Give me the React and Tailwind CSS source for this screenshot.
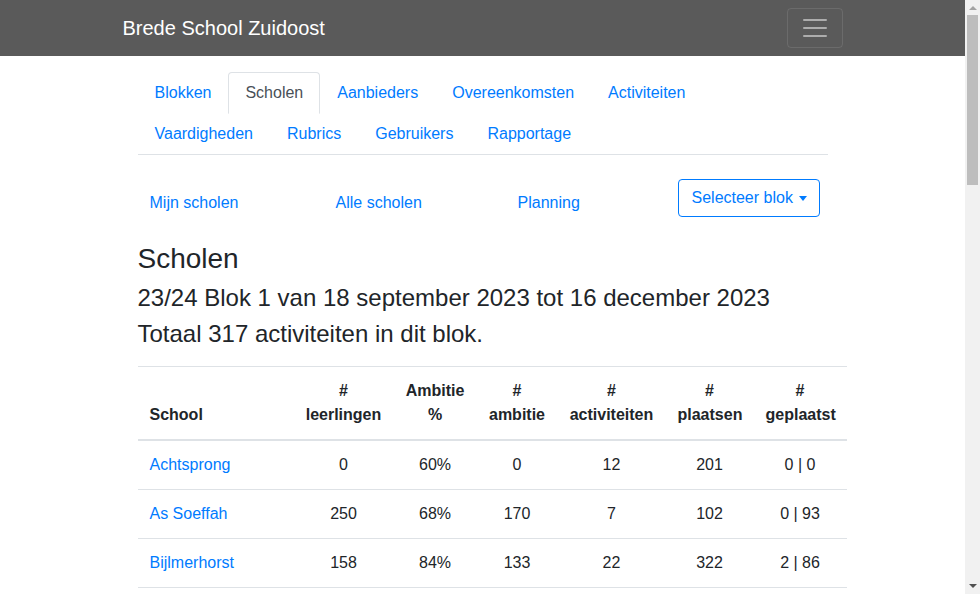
const tabs = [
  'Blokken',
  'Scholen',
  'Aanbieders',
  'Overeenkomsten',
  'Activiteiten',
  'Vaardigheden',
  'Rubrics',
  'Gebruikers',
  'Rapportage',
];

const scholen = [
  ['Achtsprong', 0, '60%', 0, 12, 201, '0 | 0'],
  ['As Soeffah', 250, '68%', 170, 7, 102, '0 | 93'],
  ['Bijlmerhorst', 158, '84%', 133, 22, 322, '2 | 86'],
];

function NavTabs() {
  return (
    <ul className="flex flex-wrap border-b border-[#dee2e6]">
      {tabs.map((t) => (
        <li key={t} className="-mb-px">
          <a
            href="#"
            className={
              t === 'Scholen'
                ? 'block px-4 py-2 leading-6 border border-[#dee2e6] border-b-white rounded-t bg-white text-[#495057]'
                : 'block px-4 py-2 leading-6 border border-transparent rounded-t text-[#007bff]'
            }
          >
            {t}
          </a>
        </li>
      ))}
    </ul>
  );
}

// window scrollbar as it shows in the screenshot
function Scrollbar() {
  return (
    <div className="flex w-[15px] shrink-0 flex-col items-center bg-[#f1f1f1]">
      <div className="flex h-[15px] items-center justify-center">
        <span className="h-0 w-0 border-x-[4px] border-b-[4px] border-x-transparent border-b-[#a3a3a3]" />
      </div>
      <div className="h-[170px] w-[11px] bg-[#bdbdbd]" />
      <div className="flex-1" />
      <div className="flex h-[15px] items-center justify-center pb-[2px]">
        <span className="h-0 w-0 border-x-[4px] border-t-[4px] border-x-transparent border-t-[#505050]" />
      </div>
    </div>
  );
}

export default function App() {
  return (
    <div className="flex h-screen overflow-hidden bg-white text-[16px] text-[#212529] font-['Liberation_Sans',Arial,sans-serif]">
      <div className="flex-1 overflow-hidden">
        <nav className="h-14 bg-[#5a5a5a]">
          <div className="mx-auto flex h-full w-[720px] items-center justify-between">
            <a href="#" className="text-[20px] leading-[30px] text-white">
              Brede School Zuidoost
            </a>
            <button className="flex h-10 w-14 items-center justify-center rounded border border-white/10">
              <svg width="30" height="30" viewBox="0 0 30 30">
                <path
                  d="M4 7h22M4 15h22M4 23h22"
                  stroke="rgba(255,255,255,0.5)"
                  strokeWidth="2"
                  strokeLinecap="round"
                />
              </svg>
            </button>
          </div>
        </nav>

        <div className="mx-auto w-[720px] px-[15px] pt-4">
          <NavTabs />

          <div className="mt-6 flex h-[38px]">
            <a href="#" className="w-[186px] pl-3 pt-[12px] leading-6 text-[#007bff]">
              Mijn scholen
            </a>
            <a href="#" className="w-[182px] pl-3 pt-[12px] leading-6 text-[#007bff]">
              Alle scholen
            </a>
            <a href="#" className="w-[172px] pl-3 pt-[12px] leading-6 text-[#007bff]">
              Planning
            </a>
            <button className="flex h-[38px] items-center rounded border border-[#007bff] pl-[13px] pr-3 leading-6 text-[#007bff]">
              Selecteer blok
              <span className="ml-[6px] h-0 w-0 border-x-[4px] border-t-[5px] border-x-transparent border-t-[#007bff]" />
            </button>
          </div>

          <h3 className="mt-[25px] mb-2 text-[28px] leading-[1.2]">Scholen</h3>
          <h4 className="mb-2 text-[24px] leading-[1.2]">
            23/24 Blok 1 van 18 september 2023 tot 16 december 2023
          </h4>
          <h4 className="mb-[17px] text-[24px] leading-[1.2]">Totaal 317 activiteiten in dit blok.</h4>

          <table className="w-[709px] table-fixed border-collapse">
            <colgroup>
              <col className="w-[156px]" />
              <col className="w-[100px]" />
              <col className="w-[83px]" />
              <col className="w-[81px]" />
              <col className="w-[108px]" />
              <col className="w-[88px]" />
              <col className="w-[93px]" />
            </colgroup>
            <thead>
              <tr className="leading-6 font-bold">
                <th className="border-t border-b-2 border-[#dee2e6] p-3 text-left align-bottom">School</th>
                <th className="border-t border-b-2 border-[#dee2e6] p-3 text-center align-bottom">
                  #<br />leerlingen
                </th>
                <th className="border-t border-b-2 border-[#dee2e6] p-3 text-center align-bottom">
                  Ambitie<br />%
                </th>
                <th className="border-t border-b-2 border-[#dee2e6] p-3 text-center align-bottom">
                  #<br />ambitie
                </th>
                <th className="border-t border-b-2 border-[#dee2e6] p-3 text-center align-bottom">
                  #<br />activiteiten
                </th>
                <th className="border-t border-b-2 border-[#dee2e6] p-3 text-center align-bottom">
                  #<br />plaatsen
                </th>
                <th className="border-t border-b-2 border-[#dee2e6] p-3 text-center align-bottom">
                  #<br />geplaatst
                </th>
              </tr>
            </thead>
            <tbody>
              {scholen.map(([naam, ...cijfers]) => (
                <tr key={naam} className="leading-6">
                  <td className="border-b border-[#dee2e6] p-3">
                    <a href="#" className="text-[#007bff]">
                      {naam}
                    </a>
                  </td>
                  {cijfers.map((c, i) => (
                    <td key={i} className="border-b border-[#dee2e6] p-3 text-center">
                      {c}
                    </td>
                  ))}
                </tr>
              ))}
            </tbody>
          </table>
        </div>
      </div>
      <Scrollbar />
    </div>
  );
}
